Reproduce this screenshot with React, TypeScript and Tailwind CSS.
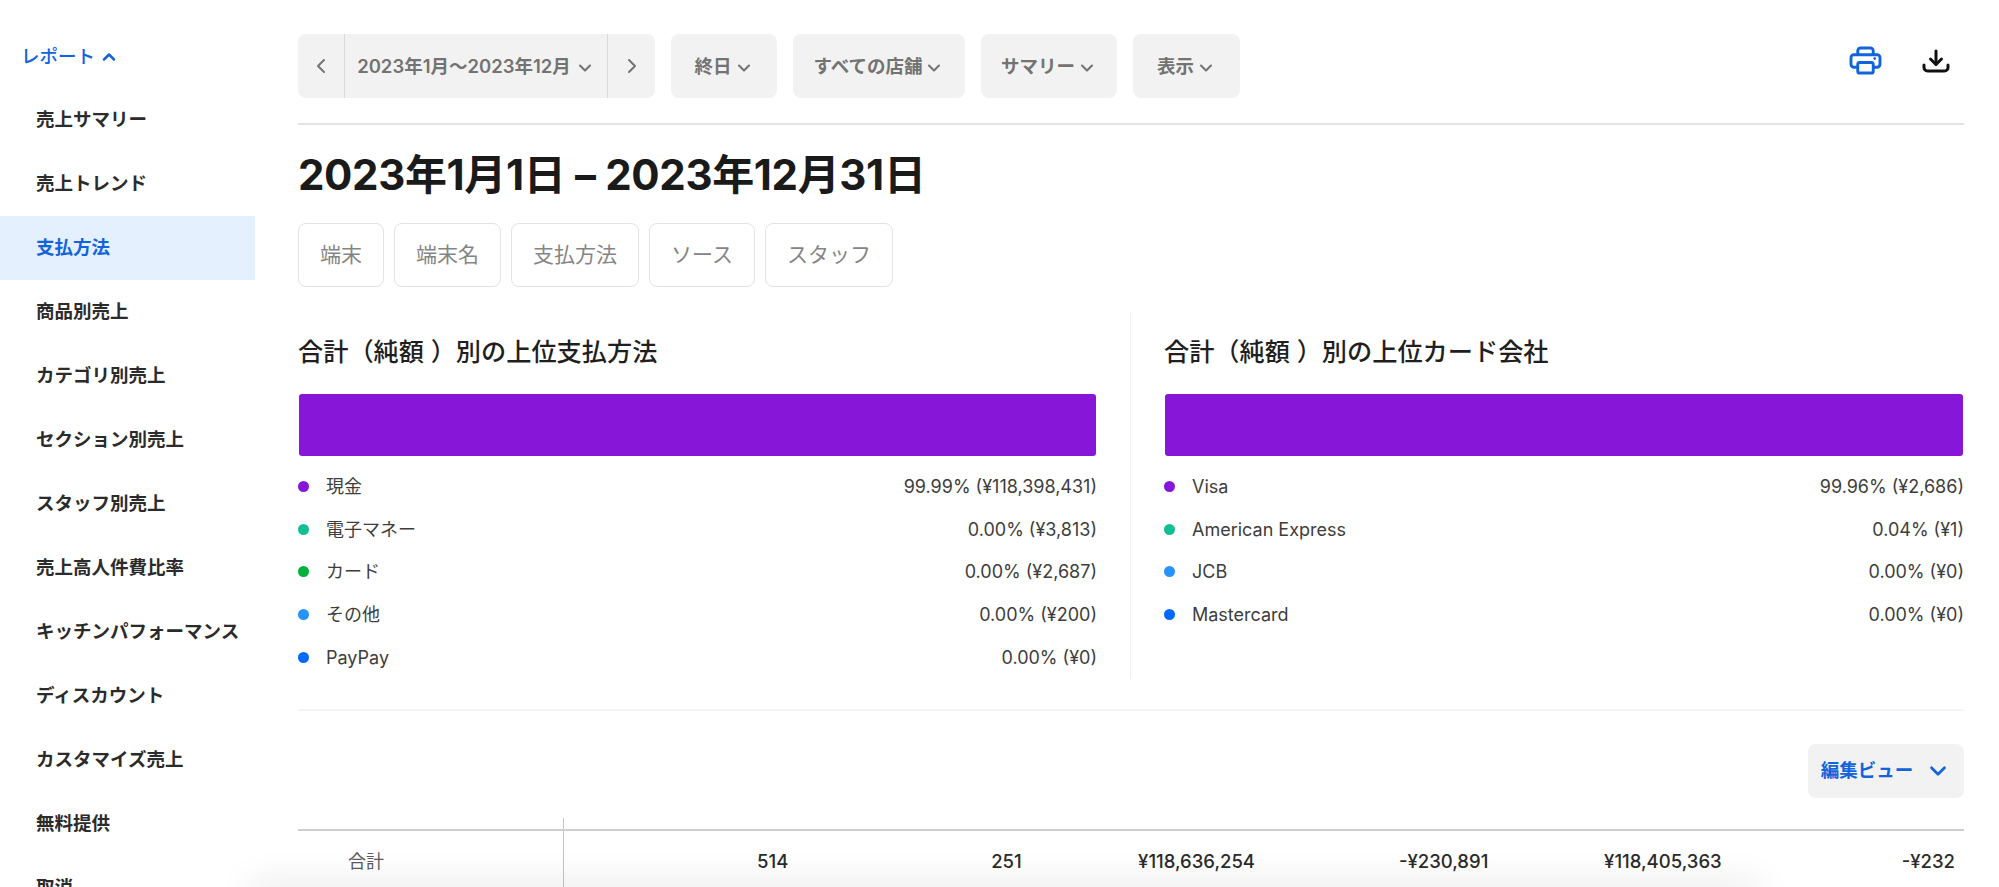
import React from "react";
import { ChevronDown, ChevronLeft, ChevronRight, ChevronUp } from "lucide-react";

const menu = [
  "売上サマリー",
  "売上トレンド",
  "支払方法",
  "商品別売上",
  "カテゴリ別売上",
  "セクション別売上",
  "スタッフ別売上",
  "売上高人件費比率",
  "キッチンパフォーマンス",
  "ディスカウント",
  "カスタマイズ売上",
  "無料提供",
  "取消",
];

const methods = [
  { name: "現金", value: "99.99% (¥118,398,431)", dot: "bg-[#8716d9]" },
  { name: "電子マネー", value: "0.00% (¥3,813)", dot: "bg-[#12bf94]" },
  { name: "カード", value: "0.00% (¥2,687)", dot: "bg-[#00b23b]" },
  { name: "その他", value: "0.00% (¥200)", dot: "bg-[#2693ff]" },
  { name: "PayPay", value: "0.00% (¥0)", dot: "bg-[#006aff]" },
];

const brands = [
  { name: "Visa", value: "99.96% (¥2,686)", dot: "bg-[#8716d9]" },
  { name: "American Express", value: "0.04% (¥1)", dot: "bg-[#12bf94]" },
  { name: "JCB", value: "0.00% (¥0)", dot: "bg-[#2693ff]" },
  { name: "Mastercard", value: "0.00% (¥0)", dot: "bg-[#006aff]" },
];

const filters = ["端末", "端末名", "支払方法", "ソース", "スタッフ"];
const totals = ["514", "251", "¥118,636,254", "-¥230,891", "¥118,405,363", "-¥232"];

function Dropdown({ label, className }: { label: string; className: string }) {
  return (
    <button className={`h-16 rounded-lg bg-[#f2f2f2] flex items-center justify-center gap-0.5 pt-[2px] text-[18.5px] font-semibold text-[#737373] ${className}`}>
      {label}
      <ChevronDown size={20} strokeWidth={2.5} className="mt-[2px]" />
    </button>
  );
}

function Breakdown({ title, rows }: { title: string; rows: typeof methods }) {
  return (
    <div>
      <h2 className="text-[25.2px] leading-8 font-medium text-[#1f1f1f]">{title}</h2>
      <div className="mt-[26px] mx-px h-[62px] rounded-[3px] bg-[#8716d9]" />
      <ul className="mt-[9px]">
        {rows.map((row) => (
          <li key={row.name} className="h-[42.75px] flex items-center text-[18px] text-[#3d3d3d]">
            <span className={`w-[11px] h-[11px] rounded-full mr-[17px] ${row.dot}`} />
            <span className="flex-1">{row.name}</span>
            <span>{row.value}</span>
          </li>
        ))}
      </ul>
    </div>
  );
}

export default function App() {
  return (
    <div className="relative h-[887px] overflow-hidden bg-white flex font-['Inter','Noto_Sans_CJK_JP',sans-serif]">
      {/* Sidebar */}
      <aside className="w-[255px] shrink-0">
        <div className="pl-[21px] pt-[41px] h-[88px] flex items-start gap-1 text-[18.5px] font-medium text-[#1263dc]">
          <span className="leading-[30px]">レポート</span>
          <ChevronUp size={20} strokeWidth={3} className="mt-[6px]" />
        </div>
        <nav>
          {menu.map((item) => (
            <div
              key={item}
              className={
                item === "支払方法"
                  ? "h-16 pl-[36px] flex items-center text-[18.5px] font-semibold text-[#1263dc] bg-[#e5f0ff]"
                  : "h-16 pl-[36px] flex items-center text-[18.5px] font-semibold text-[#2b2b2b]"
              }
            >
              {item}
            </div>
          ))}
        </nav>
      </aside>

      {/* Main */}
      <main className="flex-1 pl-[43px] pr-9 pt-[34px]">
        <div className="flex items-start gap-4 pb-[25px] border-b-2 border-[#e3e3e3]">
          <div className="h-16 w-[357px] rounded-lg bg-[#f2f2f2] flex text-[#737373]">
            <button className="w-[47px] flex items-center justify-center border-r border-[#d9d9d9]">
              <ChevronLeft size={24} strokeWidth={2} />
            </button>
            <button className="flex-1 flex items-center justify-center gap-1 pt-[2px] text-[18.5px] font-semibold">
              2023年1月〜2023年12月
              <ChevronDown size={20} strokeWidth={2.5} className="mt-[2px]" />
            </button>
            <button className="w-[48px] flex items-center justify-center border-l border-[#d9d9d9]">
              <ChevronRight size={24} strokeWidth={2} />
            </button>
          </div>
          <Dropdown label="終日" className="w-[106px]" />
          <Dropdown label="すべての店舗" className="w-[172px]" />
          <Dropdown label="サマリー" className="w-[136px]" />
          <Dropdown label="表示" className="w-[107px]" />
          <div className="ml-auto flex items-center gap-10 pr-[14px] pt-[12px]">
            <svg width="33" height="29" viewBox="0 0 34 30" fill="none" stroke="#1263dc" strokeWidth="3" strokeLinejoin="round">
              <path d="M9 9V5a3 3 0 0 1 3-3h10a3 3 0 0 1 3 3v4" />
              <path d="M9 22H5a3 3 0 0 1-3-3v-7a3 3 0 0 1 3-3h24a3 3 0 0 1 3 3v7a3 3 0 0 1-3 3h-4" />
              <rect x="9" y="17" width="16" height="11" rx="2" />
              <circle cx="26.5" cy="13" r="1" fill="#1263dc" strokeWidth="1" />
            </svg>
            <svg width="28" height="24" viewBox="0 0 28 24" fill="none" stroke="#111" strokeWidth="3" strokeLinecap="round" strokeLinejoin="round">
              <path d="M14 2v13" />
              <path d="M8.5 10l5.5 5.5 5.5-5.5" />
              <path d="M2 16v2.5a3.5 3.5 0 0 0 3.5 3.5h17a3.5 3.5 0 0 0 3.5-3.5V16" />
            </svg>
          </div>
        </div>

        <h1 className="mt-[26px] text-[42px] leading-[48px] font-bold tracking-[-0.35px] text-[#1a1a1a]">2023年1月1日 – 2023年12月31日</h1>

        <div className="mt-[24px] flex gap-[10px]">
          {filters.map((f) => (
            <div key={f} className="h-16 px-[21px] flex items-center rounded-lg border-[1.5px] border-[#e3e3e3] text-[21px] text-[#858585]">
              {f}
            </div>
          ))}
        </div>

        <div className="mt-[25px] grid grid-cols-2 border-b-2 border-[#f5f5f5] pb-[30px]">
          <div className="pr-[33px] pt-6 border-r border-[#efefef]">
            <Breakdown title="合計（純額 ）別の上位支払方法" rows={methods} />
          </div>
          <div className="pl-[33px] pt-6">
            <Breakdown title="合計（純額 ）別の上位カード会社" rows={brands} />
          </div>
        </div>

        <div className="mt-[33px] flex justify-end">
          <button className="w-[156px] h-[54px] rounded-lg bg-[#f2f2f2] flex items-center justify-center gap-3 text-[18.5px] font-semibold text-[#1263dc]">
            編集ビュー
            <ChevronDown size={26} strokeWidth={2.5} />
          </button>
        </div>

        {/* Totals table */}
        <div className="mt-[31px] flex border-t-2 border-[#cfcfcf]">
          <div className="relative w-[266px] shrink-0 border-r border-[#c4c4c4] h-[62px] pl-[50px] flex items-center text-[18px] text-[#5c5c5c]">
            <span className="absolute -right-px -top-[13px] h-[11px] w-px bg-[#c4c4c4]" />
            合計
          </div>
          {totals.map((t) => (
            <div key={t} className="w-[233.33px] shrink-0 pr-[9px] h-[62px] flex items-center justify-end text-[18.5px] font-medium text-[#2b2b2b]">
              {t}
            </div>
          ))}
        </div>
      </main>

      {/* Floating footer shadow */}
      <div className="absolute left-[250px] w-[1510px] top-[887px] h-[10px] shadow-[0_0_36px_rgba(0,0,0,0.2)] pointer-events-none" />
    </div>
  );
}
